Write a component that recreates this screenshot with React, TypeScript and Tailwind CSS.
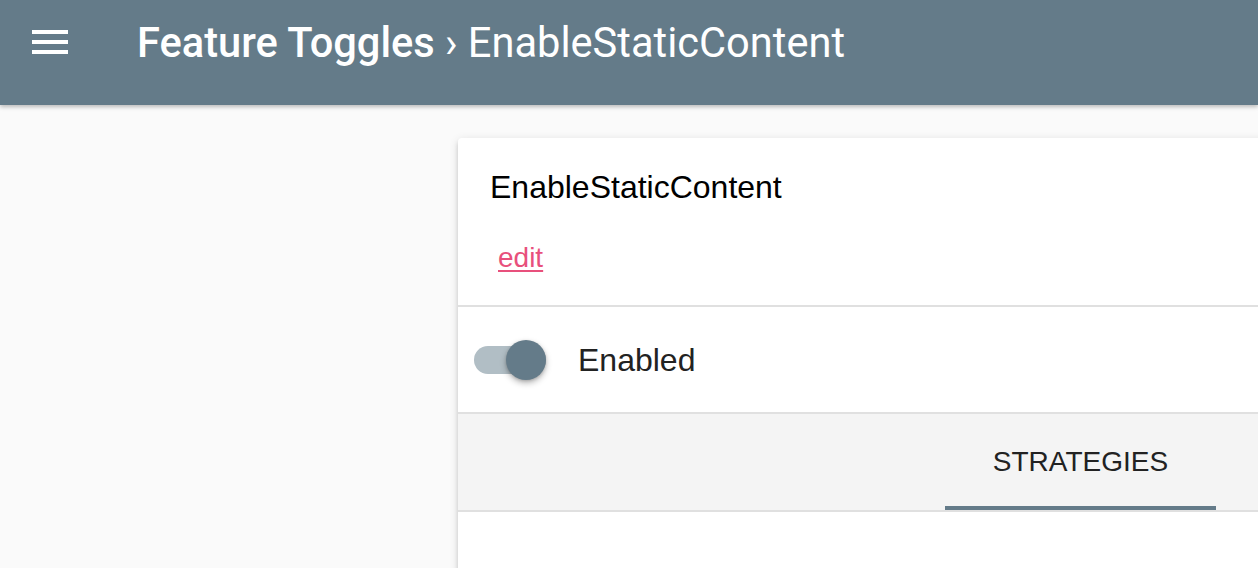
import React from "react";

export default function App() {
  return (
    <div className="w-full h-[568px] bg-[#fafafa] overflow-hidden relative" style={{ fontFamily: '"Liberation Sans", Arial, sans-serif' }}>
      <header className="relative z-10 h-[105px] bg-[#647b89] flex items-start pl-[26px] pt-[18px] shadow-[0_2px_4px_rgba(0,0,0,0.25)]">
        <svg width="48" height="48" viewBox="0 0 24 24" className="shrink-0">
          <path fill="#ffffff" d="M3 18h18v-2H3v2zm0-5h18v-2H3v2zm0-7v2h18V6H3z" />
        </svg>
        <h1 className="ml-[63px] mt-[4px] text-[41.6px] leading-[42px] text-white whitespace-nowrap" style={{ fontFamily: 'Roboto, "Noto Sans", sans-serif' }}>
          <span className="font-medium">Feature Toggles</span>
          <span className="font-normal"> › EnableStaticContent</span>
        </h1>
      </header>

      <main className="pl-[458px] pt-[33px]">
        <div className="w-[1245px] bg-white rounded-[4px] shadow-[0_4px_4px_0_rgba(0,0,0,0.14),0_6px_2px_-4px_rgba(0,0,0,0.2),0_2px_10px_0_rgba(0,0,0,0.12)]">
          <div className="pt-[33px] pb-[33px] border-b-2 border-[#e0e0e0]">
            <div className="pl-[32px] text-[32px] leading-[32px] text-black">EnableStaticContent</div>
            <div className="pl-[40px] mt-[41px] text-[28px] leading-[28px]">
              <a href="#" className="text-[#e8507c] underline underline-offset-[3px]">edit</a>
            </div>
          </div>

          <div className="h-[107px] flex items-center pl-[16px] border-b-2 border-[#e0e0e0]">
            <div className="relative w-[72px] h-[40px] shrink-0">
              <div className="absolute left-0 top-[6px] w-[72px] h-[28px] rounded-full bg-[#b1bec5]" />
              <div className="absolute left-[32px] top-0 w-[40px] h-[40px] rounded-full bg-[#647b89] shadow-[0_3px_6px_rgba(0,0,0,0.28),0_1px_3px_rgba(0,0,0,0.15)]" />
            </div>
            <span className="ml-[32px] text-[32px] leading-[32px] text-[#222222]">Enabled</span>
          </div>

          <div className="h-[98px] bg-[#f4f4f4] border-b-2 border-[#e0e0e0] flex justify-center">
            <div className="relative w-[271px] h-[96px] flex items-center justify-center">
              <span className="text-[28px] leading-[28px] text-[#222222] uppercase">Strategies</span>
              <div className="absolute left-0 bottom-0 w-full h-[4px] bg-[#647b89]" />
            </div>
          </div>

          <div className="h-[200px]" />
        </div>
      </main>
    </div>
  );
}
